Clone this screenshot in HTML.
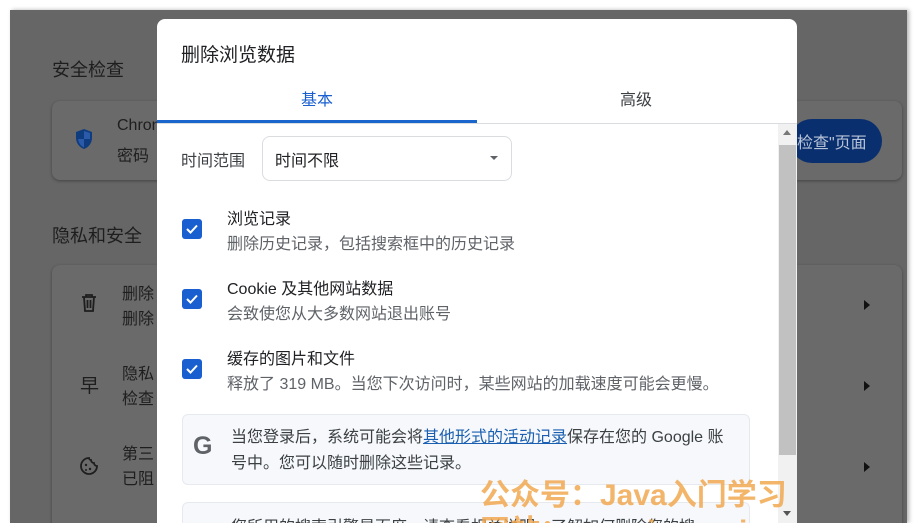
<!DOCTYPE html>
<html><head><meta charset="utf-8"><style>
*{margin:0;padding:0;box-sizing:border-box}
html,body{width:917px;height:523px;overflow:hidden}
body{background:#fff;font-family:"Liberation Sans","Noto Sans CJK SC",sans-serif;color:#202124}
#wrap{position:relative;width:917px;height:523px;overflow:hidden}
.abs{position:absolute}
#bg{left:10px;top:10px;width:897px;height:513px;background:#666;box-shadow:2px 0 4px rgba(0,0,0,.3)}
.card{background:#6a6a6a;border-radius:8px;box-shadow:0 1px 3px rgba(0,0,0,.35)}
.gt{color:#1e1e1e}
#dlg{left:157px;top:19px;width:640px;height:504px;background:#fff;border-radius:8px 8px 0 0}
.chk{width:20px;height:20px;background:#1a5fd0;border-radius:3px}
.chk svg{position:absolute;left:3px;top:4px}
.t1{font-size:16px;color:#202124}
.t2{font-size:16px;color:#5f6368}
.wm{color:rgba(240,168,80,.85);font-weight:bold;font-size:30px;white-space:nowrap}
.tri{width:0;height:0;border-top:5px solid transparent;border-bottom:5px solid transparent;border-left:6px solid #111}
</style></head><body><div id="wrap">
<div id="bg" class="abs"></div>
<div class="abs gt" style="left:52px;top:56px;font-size:18px">安全检查</div>
<div class="abs card" style="left:52px;top:101px;width:850px;height:79px"></div>
<svg class="abs" style="left:74px;top:128px" width="20" height="22" viewBox="0 0 20 22"><path d="M10 1L2 4v6c0 5 3.5 9.5 8 11 4.5-1.5 8-6 8-11V4z" fill="#0f3c7f"/><path d="M10 3v8H4c.5 4 3 7 6 8.5V11h6V5z" fill="#2a5aa8"/></svg>
<div class="abs gt" style="left:117px;top:117px;font-size:16px">Chrom</div>
<div class="abs gt" style="left:117px;top:142px;font-size:16px">密码</div>
<div class="abs" style="left:790px;top:119px;width:92px;height:44px;border-radius:22px;background:#0a2f6f"></div>
<div class="abs" style="left:797px;top:129px;font-size:16px;color:#b8c4d8">检查"页面</div>
<div class="abs gt" style="left:52px;top:222px;font-size:18px">隐私和安全</div>
<div class="abs card" style="left:52px;top:265px;width:850px;height:270px"></div>
<svg class="abs" style="left:81px;top:294px" width="16" height="18" viewBox="0 0 16 18"><path d="M1 3h14M5 3V1h6v2M3 3l1 14h8l1-14M6.5 6v8M9.5 6v8" stroke="#1e1e1e" stroke-width="1.8" fill="none"/></svg>
<div class="abs gt" style="left:122px;top:282px;font-size:16px;line-height:25px">删除<br>删除</div>
<div class="abs gt" style="left:80px;top:371px;font-size:19px">早</div>
<div class="abs gt" style="left:122px;top:362px;font-size:16px;line-height:25px">隐私<br>检查</div>
<svg class="abs" style="left:79px;top:456px" width="20" height="20" viewBox="0 0 20 20"><path d="M10 2a8 8 0 1 0 8 8 3 3 0 0 1-3-3 3 3 0 0 1-3-3 2 2 0 0 1-2-2z" stroke="#1e1e1e" stroke-width="1.8" fill="none"/><circle cx="7" cy="9" r="1.2" fill="#1e1e1e"/><circle cx="11" cy="13" r="1.2" fill="#1e1e1e"/><circle cx="7" cy="14" r="1" fill="#1e1e1e"/></svg>
<div class="abs gt" style="left:122px;top:442px;font-size:16px;line-height:25px">第三<br>已阻</div>
<div class="abs tri" style="left:864px;top:300px"></div>
<div class="abs tri" style="left:864px;top:381px"></div>
<div class="abs tri" style="left:864px;top:462px"></div>

<div id="dlg" class="abs"></div>
<div class="abs" style="left:181px;top:40px;font-size:19px">删除浏览数据</div>
<div class="abs" style="left:301px;top:86px;font-size:16px;color:#1a5fd0">基本</div>
<div class="abs" style="left:620px;top:86px;font-size:16px;color:#3c4043">高级</div>
<div class="abs" style="left:157px;top:120px;width:320px;height:3px;background:#1a66cc"></div>
<div class="abs" style="left:157px;top:123px;width:640px;height:1px;background:#dadce0"></div>
<div class="abs" style="left:778px;top:124px;width:19px;height:399px;background:#f1f1f1"></div>
<div class="abs" style="left:779px;top:145px;width:17px;height:310px;background:#c1c1c1"></div>
<div class="abs" style="left:783px;top:130px;width:0;height:0;border-left:4px solid transparent;border-right:4px solid transparent;border-bottom:5px solid #777"></div>
<div class="abs" style="left:783px;top:511px;width:0;height:0;border-left:4px solid transparent;border-right:4px solid transparent;border-top:5px solid #555"></div>

<div class="abs" style="left:181px;top:147px;font-size:16px;color:#3c4043">时间范围</div>
<div class="abs" style="left:262px;top:136px;width:250px;height:45px;border:1px solid #dadce0;border-radius:8px"></div>
<div class="abs" style="left:275px;top:147px;font-size:16px">时间不限</div>
<div class="abs" style="left:490px;top:156px;width:0;height:0;border-left:4px solid transparent;border-right:4px solid transparent;border-top:4px solid #5f6368"></div>

<div class="abs chk" style="left:182px;top:219px"><svg width="14" height="12"><path d="M2 6l3.5 3.5L12 2.5" stroke="#fff" stroke-width="2" fill="none"/></svg></div>
<div class="abs t1" style="left:227px;top:205px">浏览记录</div>
<div class="abs t2" style="left:227px;top:230px">删除历史记录，包括搜索框中的历史记录</div>
<div class="abs chk" style="left:182px;top:289px"><svg width="14" height="12"><path d="M2 6l3.5 3.5L12 2.5" stroke="#fff" stroke-width="2" fill="none"/></svg></div>
<div class="abs t1" style="left:227px;top:275px">Cookie 及其他网站数据</div>
<div class="abs t2" style="left:227px;top:300px">会致使您从大多数网站退出账号</div>
<div class="abs chk" style="left:182px;top:359px"><svg width="14" height="12"><path d="M2 6l3.5 3.5L12 2.5" stroke="#fff" stroke-width="2" fill="none"/></svg></div>
<div class="abs t1" style="left:227px;top:345px">缓存的图片和文件</div>
<div class="abs t2" style="left:227px;top:370px">释放了 319 MB。当您下次访问时，某些网站的加载速度可能会更慢。</div>

<div class="abs" style="left:182px;top:414px;width:568px;height:71px;background:#f6f8fb;border:1px solid #e6e9ee;border-radius:6px"></div>
<div class="abs" style="left:193px;top:432px;font-size:25px;font-weight:bold;color:#5f6368">G</div>
<div class="abs" style="left:231px;top:425px;font-size:16px;line-height:26px;color:#3c4043;width:505px">当您登录后，系统可能会将<span style="color:#1a5fb0;text-decoration:underline">其他形式的活动记录</span>保存在您的 Google 账号中。您可以随时删除这些记录。</div>
<div class="abs" style="left:182px;top:502px;width:568px;height:21px;background:#f6f8fb;border:1px solid #e6e9ee;border-bottom:none;border-radius:6px 6px 0 0"></div>
<div class="abs" style="left:231px;top:513px;font-size:16px;color:#3c4043;height:10px;overflow:hidden;white-space:nowrap">您所用的搜索引擎是百度。请查看相关说明，了解如何删除您的搜</div>

<div class="abs wm" style="left:480px;top:470px">公众号：Java入门学习</div>
<div class="abs wm" style="left:480px;top:506px;height:17px;overflow:hidden">网站：www.javaxxing.com</div>
</div></body></html>
